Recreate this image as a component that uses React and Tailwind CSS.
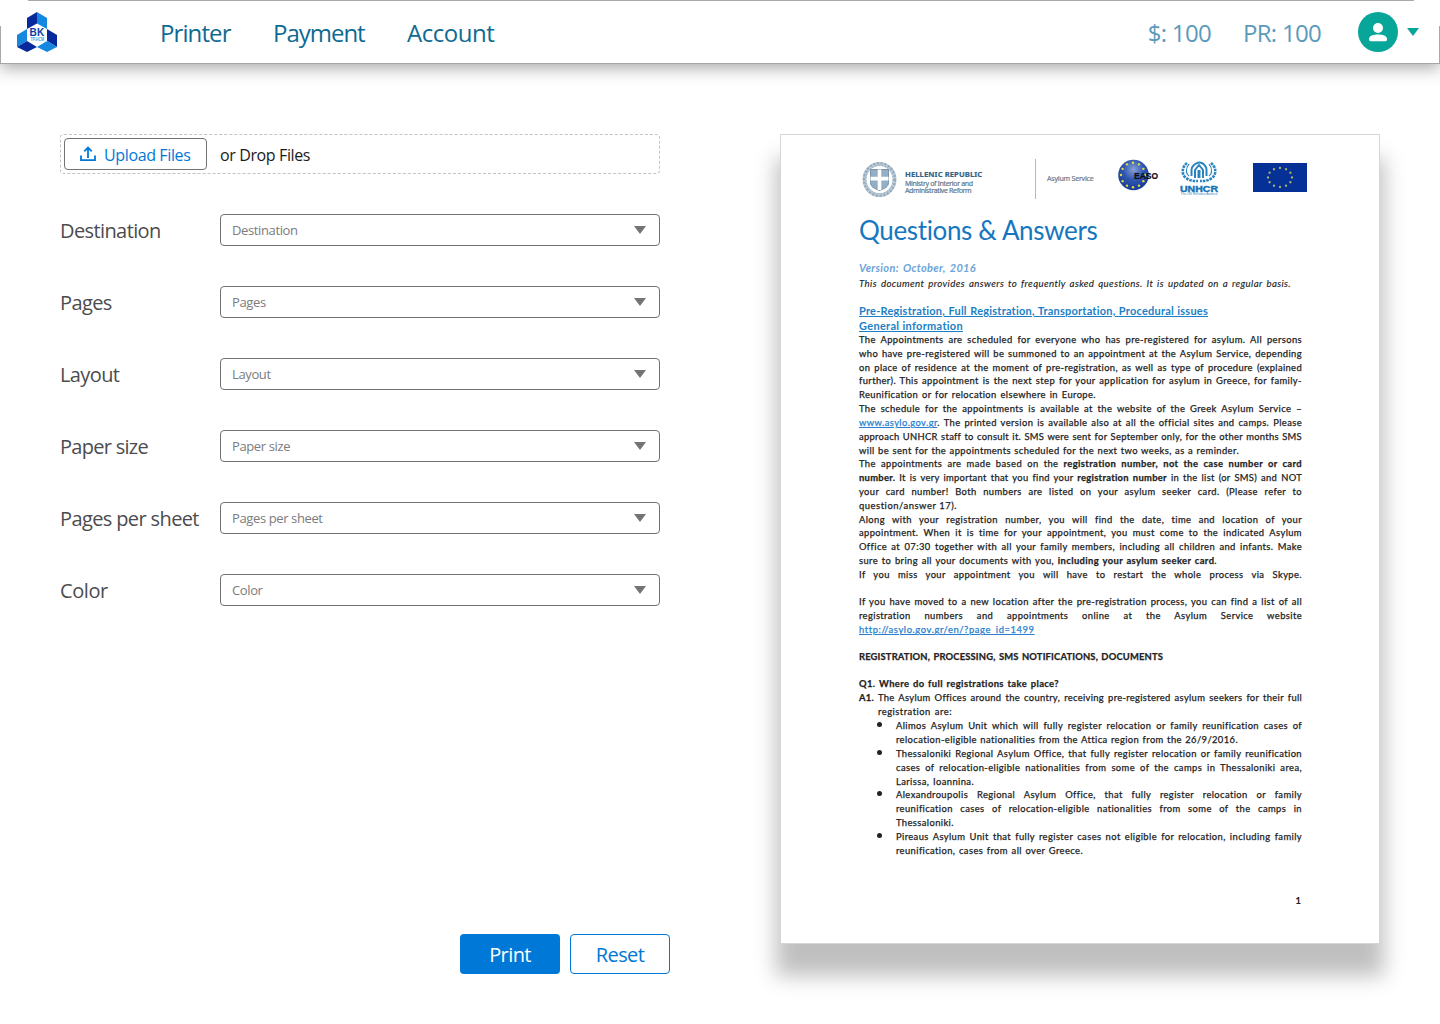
import React from "react";

const fields = [
  ["Destination", "tracking-[-0.600px]"],
  ["Pages", "tracking-[-0.600px]"],
  ["Layout", "tracking-[-0.600px]"],
  ["Paper size", "tracking-[-0.720px]"],
  ["Pages per sheet", "tracking-[-0.620px]"],
  ["Color", "tracking-[-0.400px]"],
];

const Caret = ({ className }) => (
  <svg viewBox="0 0 12 8" className={className} fill="currentColor">
    <path d="M0 0h12L6 8z" />
  </svg>
);

const Logo = () => (
  <svg viewBox="0 0 40 40" className="h-10 w-10">
    <path d="M10 6 20 0v11.5L10 17z" fill="#062a9b" />
    <path d="M20 0l10 6v11l-10-5.5z" fill="#1488de" />
    <path d="M0 23l10-6v12L0 35z" fill="#1488de" />
    <path d="M0 35l10-6 10 6-10 5z" fill="#062a9b" />
    <path d="M30 17l10 6v12l-10-6z" fill="#062a9b" />
    <path d="M20 35l10-6 10 6-10 5z" fill="#1488de" />
    <text x="12.600" y="24.300" fontSize="10" fontWeight="700" textLength="14.600" lengthAdjust="spacingAndGlyphs" fontFamily="Liberation Sans, sans-serif" fill="#0a3ca5">BK</text>
    <text x="13.400" y="28.900" fontSize="4.800" fontWeight="700" textLength="13.800" lengthAdjust="spacingAndGlyphs" fontFamily="Liberation Sans, sans-serif" fill="#4aa5e6">TP.HCM</text>
  </svg>
);

const Line = ({ w = "w-full", className = "", children }) => (
  <div className={`${w} ${className} whitespace-nowrap [text-align-last:justify]`}>{children}</div>
);

const Bullet = ({ lines }) => (
  <li className="flex">
    <span className="mt-[3px] mr-[14px] size-[5px] shrink-0 rounded-full bg-[#222]" />
    <div className="grow">
      {lines.map(([t, w]) => (
        <Line key={t} w={w}>{t}</Line>
      ))}
    </div>
  </li>
);

const starPoints = Array.from({ length: 12 }, (_, i) => [
  Math.sin((i * Math.PI) / 6),
  -Math.cos((i * Math.PI) / 6),
]);

const Emblem = () => (
  <svg viewBox="0 0 36 38" className="h-[38px] w-9">
    <ellipse cx="17.500" cy="18.500" rx="15" ry="15.600" fill="none" stroke="#bccbd6" strokeWidth="4" />
    <ellipse cx="17.500" cy="18.500" rx="15.600" ry="16.400" fill="none" stroke="#93a8b9" strokeWidth="2" strokeDasharray="2.200 1.600" />
    <ellipse cx="17.500" cy="18.500" rx="13.600" ry="14.200" fill="none" stroke="#8fa5b7" strokeWidth="1" strokeDasharray="1.400 1.800" />
    <path d="M8.500 8.500h18v13c0 4.500-4 6-9 8-5-2-9-3.500-9-8z" fill="#94aec4" stroke="#7893ab" />
    <path d="M15.700 8.500h3.600v7.300h7.200v3.600h-7.200v9.600h-3.600v-9.600H8.500v-3.600h7.200z" fill="#fff" />
  </svg>
);

const Easo = () => (
  <svg viewBox="0 0 41 32" className="h-8 w-[41px]">
    <defs>
      <radialGradient id="globe" cx="50%" cy="32%" r="60%">
        <stop offset="0" stopColor="#86a0d8" />
        <stop offset=".55" stopColor="#3157b0" />
        <stop offset="1" stopColor="#1c3f9c" />
      </radialGradient>
    </defs>
    <circle cx="15.500" cy="16" r="15.300" fill="url(#globe)" />
    {starPoints.map(([x, y], i) => (
      <circle key={i} cx={15 + x * 12} cy={16 + y * 12.3} r="1.200" fill="#e3df3d" />
    ))}
    <text x="16" y="19.900" fontSize="8.300" fontWeight="700" textLength="24" lengthAdjust="spacingAndGlyphs" fontFamily="Liberation Sans, sans-serif" fill="#0d0d14" stroke="#0d0d14" strokeWidth=".2">EASO</text>
  </svg>
);

const Unhcr = () => (
  <svg viewBox="0 0 40 34" className="h-[34px] w-10" fill="none" stroke="#2a84bf">
    <path d="M8 2C3 6 2 13 7 17c4 3 8 3 12 3M32 2c5 4 6 11 1 15-4 3-8 3-12 3" strokeWidth="2.600" strokeDasharray="2.600 .9" />
    <path d="M10 3C6 8 7 13 10 15M30 3c4 5 3 10 0 12" strokeWidth="1.200" />
    <path d="M12.500 15V9c0-4 4-7 7.500-7.500S27.500 5 27.500 9v6M16 17V9l4-5 4 5v8" strokeWidth="2" />
    <path d="M20 9v8" strokeWidth="3" />
    <text x="1" y="30.500" fontSize="8.700" fontWeight="700" textLength="38" lengthAdjust="spacingAndGlyphs" fontFamily="Liberation Sans, sans-serif" fill="#1673b4" stroke="#1673b4" strokeWidth=".4">UNHCR</text>
    <text x="1.500" y="33.700" fontSize="3" textLength="37" lengthAdjust="spacingAndGlyphs" fontFamily="Liberation Sans, sans-serif" fill="#3b8dc5" stroke="none">The UN Refugee Agency</text>
  </svg>
);

const EuFlag = () => (
  <svg viewBox="0 0 54 29" className="h-[29px] w-[54px]">
    <path d="M0 0h54v29H0z" fill="#053096" />
    {starPoints.map(([x, y], i) => (
      <circle key={i} cx={27 + x * 12} cy={14.5 + y * 9.5} r="1.150" fill="#a9b36a" />
    ))}
  </svg>
);

const Document = () => (
  <article className="h-[810px] w-[600px] border border-[#d6d6d6] bg-white pt-6 pl-[78px] font-[Lato,sans-serif] text-[#222] shadow-[0_28px_20px_4px_rgba(0,0,0,0.25)] [font-variant-ligatures:none]">
    <header className="flex h-10 items-start pl-[3px]">
      <div className="mt-0.5"><Emblem /></div>
      <div className="mt-[11px] ml-[7px] w-[130px] font-['Noto_Sans',sans-serif] text-[7px] leading-[7px] whitespace-nowrap text-[#66788c] [-webkit-text-stroke:0.200px_currentColor]">
        <div className="mb-px text-[7.600px] leading-[9px] font-bold tracking-[0.100px] text-[#2f6388]">HELLENIC REPUBLIC</div>
        <div className="tracking-[-0.360px]">Ministry of Interior and</div>
        <div className="tracking-[-0.360px]">Administrative Reform</div>
      </div>
      <div className="h-10 w-px bg-[#b5b8bd]" />
      <div className="mt-[15px] ml-[11px] w-[71px] font-['Noto_Sans',sans-serif] text-[7px] leading-[10px] tracking-[-0.200px] whitespace-nowrap text-[#75798a] [-webkit-text-stroke:0.200px_currentColor]">Asylum Service</div>
      <Easo />
      <div className="mt-0.5 ml-5"><Unhcr /></div>
      <div className="mt-1 ml-[34px]"><EuFlag /></div>
    </header>
    <h1 className="mt-[14px] h-[34px] w-[239px] text-[26px] leading-[34px] tracking-[-0.350px] whitespace-nowrap text-[#1677c0]">Questions &amp; Answers</h1>
    <div className="mt-[14px] w-[443px]">
      <Line w="w-[117px]" className="text-[11px] leading-[14px] font-bold tracking-[0.320px] text-[#6ba4da] italic">Version: October, 2016</Line>
      <Line w="w-[432px]" className="mt-px text-[9.700px] leading-[14px] tracking-[0.380px] italic [-webkit-text-stroke:0.120px_currentColor]">This document provides answers to frequently asked questions. It is updated on a regular basis.</Line>
      <div className="mt-[14px] text-[11px] leading-[14.500px] font-bold tracking-[0.220px] text-[#1c7fc6] underline">
        <Line w="w-[349px]">Pre-Registration, Full Registration, Transportation, Procedural issues</Line>
        <Line w="w-[104px]" className="tracking-[0.300px]">General information</Line>
      </div>
      <div className="text-[9.400px] leading-[13.810px] tracking-[0.400px] [-webkit-text-stroke:0.250px_currentColor]">
        <Line>The Appointments are scheduled for everyone who has pre-registered for asylum. All persons</Line>
        <Line>who have pre-registered will be summoned to an appointment at the Asylum Service, depending</Line>
        <Line className="tracking-[0.350px]">on place of residence at the moment of pre-registration, as well as type of procedure (explained</Line>
        <Line>further). This appointment is the next step for your application for asylum in Greece, for family-</Line>
        <Line w="w-[237px]">Reunification or for relocation elsewhere in Europe.</Line>
        <Line>The schedule for the appointments is available at the website of the Greek Asylum Service –</Line>
        <Line><a className="text-[#2b7fd0] underline">www.asylo.gov.gr</a>. The printed version is available also at all the official sites and camps. Please</Line>
        <Line className="tracking-[0.300px]">approach UNHCR staff to consult it. SMS were sent for September only, for the other months SMS</Line>
        <Line w="w-[380px]">will be sent for the appointments scheduled for the next two weeks, as a reminder.</Line>
        <Line>The appointments are made based on the <b>registration number, not the case number or card</b></Line>
        <Line className="tracking-[0.300px]"><b>number.</b> It is very important that you find your <b>registration number</b> in the list (or SMS) and NOT</Line>
        <Line>your card number! Both numbers are listed on your asylum seeker card. (Please refer to</Line>
        <Line w="w-[98px]" className="tracking-[0.550px]">question/answer 17).</Line>
        <Line>Along with your registration number, you will find the date, time and location of your</Line>
        <Line>appointment. When it is time for your appointment, you must come to the indicated Asylum</Line>
        <Line>Office at 07:30 together with all your family members, including all children and infants. Make</Line>
        <Line w="w-[358px]">sure to bring all your documents with you, <b>including your asylum seeker card</b>.</Line>
        <Line>If you miss your appointment you will have to restart the whole process via Skype.</Line>
        <br />
        <Line>If you have moved to a new location after the pre-registration process, you can find a list of all</Line>
        <Line>registration numbers and appointments online at the Asylum Service website</Line>
        <Line w="w-[176px]" className="tracking-[0.590px]"><a className="text-[#2b7fd0] underline">http://asylo.gov.gr/en/?page_id=1499</a></Line>
        <br />
        <Line w="w-[304px]" className="-mt-px mb-px font-bold tracking-[0.170px]">REGISTRATION, PROCESSING, SMS NOTIFICATIONS, DOCUMENTS</Line>
        <br />
        <Line w="w-[200px]" className="-mt-px font-bold">Q1. Where do full registrations take place?</Line>
        <Line className="tracking-[0.320px]"><b>A1.</b> The Asylum Offices around the country, receiving pre-registered asylum seekers for their full</Line>
        <Line w="w-[74px]" className="ml-[19px] tracking-[0.500px]">registration are:</Line>
        <ul className="pt-[0.600px] pl-[18px]">
          <Bullet lines={[["Alimos Asylum Unit which will fully register relocation or family reunification cases of"], ["relocation-eligible nationalities from the Attica region from the 26/9/2016.", "w-[342px]"]]} />
          <Bullet lines={[["Thessaloniki Regional Asylum Office, that fully register relocation or family reunification"], ["cases of relocation-eligible nationalities from some of the camps in Thessaloniki area,"], ["Larissa, Ioannina.", "w-[78px]"]]} />
          <Bullet lines={[["Alexandroupolis Regional Asylum Office, that fully register relocation or family"], ["reunification cases of relocation-eligible nationalities from some of the camps in"], ["Thessaloniki.", "w-[59px]"]]} />
          <Bullet lines={[["Pireaus Asylum Unit that fully register cases not eligible for relocation, including family"], ["reunification, cases from all over Greece.", "w-[187px]"]]} />
        </ul>
      </div>
      <div className="mt-[35.400px] pr-px text-right text-[10px] leading-[14px] font-bold">1</div>
    </div>
  </article>
);

export default function App() {
  return (
    <div className="h-[1024px] w-[1440px] overflow-hidden bg-white font-['Open_Sans',sans-serif]">
      <header className="relative flex h-16 items-start border-b border-[#a9a4a6] bg-white shadow-[0_4px_16px_rgba(0,0,0,0.35)]">
        <div className="absolute top-0 right-[26px] left-[28px] h-px bg-[#aca7a9]" />
        <div className="absolute top-[26px] bottom-0 left-0 w-px bg-[#aca7a9]" />
        <div className="absolute top-[26px] right-0 bottom-0 w-px bg-[#aca7a9]" />
        <div className="mt-3 ml-[17px]"><Logo /></div>
        <nav className="mt-[17px] ml-[103px] flex text-2xl leading-8 text-[#0f6a92]">
          <a className="w-[113px] tracking-[-0.900px]">Printer</a>
          <a className="w-[134px] tracking-[-1.020px]">Payment</a>
          <a className="tracking-[-0.450px]">Account</a>
        </nav>
        <div className="mt-[17px] ml-auto flex gap-8 text-2xl leading-8 tracking-[-0.700px] text-[#5b9aba]">
          <span>$: 100</span>
          <span>PR: 100</span>
        </div>
        <div className="mt-3 ml-[37px] grid size-10 place-items-center rounded-full bg-[#08a699] text-white">
          <svg viewBox="0 0 20 20" className="size-5" fill="currentColor">
            <circle cx="10" cy="6" r="5" />
            <path d="M1 17c0-3.500 4.500-4.600 9-4.600s9 1.100 9 4.600c0 1.500-.5 2.200-1.500 2.200h-15C1.500 19.200 1 18.500 1 17z" />
          </svg>
        </div>
        <Caret className="mt-7 mr-[21px] ml-[9px] h-2 w-3 text-[#08a699]" />
      </header>
      <main className="flex items-start justify-between px-[60px] pt-[70px]">
        <section className="flex h-[840px] w-[610px] flex-col">
          <div className="flex h-10 w-[600px] items-center rounded border border-dashed border-[#c3c3c3] pl-[3px]">
            <button className="flex h-8 w-[143px] items-center rounded border border-[#737375] pl-[15px] text-base tracking-[-0.370px] whitespace-nowrap text-[#0078d7]">
              <svg viewBox="0 0 16 16" className="mr-2 size-4" fill="none" stroke="currentColor" strokeWidth="1.800">
                <path d="M1 9.500v4.600h14V9.500M8 12V1.500M4.300 5.300l3.700-3.800 3.700 3.800" />
              </svg>
              <span className="pt-0.5">Upload Files</span>
            </button>
            <span className="ml-[13px] pt-0.5 text-base tracking-[-0.380px] text-[#1b1b1b]">or Drop Files</span>
          </div>
          {fields.map(([f, tracking]) => (
            <div key={f} className="mt-10 flex h-8 items-center">
              <label className={`w-40 pt-0.5 text-xl whitespace-nowrap text-[#4c4c4e] ${tracking}`}>{f}</label>
              <div className="flex h-8 w-[440px] items-center justify-between rounded border border-[#737375] pr-[13px] pl-[11px]">
                <span className="pt-0.5 text-[13px] tracking-[-0.380px] text-[#7b7b7d]">{f}</span>
                <Caret className="h-2 w-3 text-[#737375]" />
              </div>
            </div>
          ))}
          <div className="mt-auto flex justify-end gap-2.5 text-xl tracking-[-0.600px]">
            <button className="h-10 w-[100px] rounded bg-[#0078d7] pt-0.5 text-white">Print</button>
            <button className="h-10 w-[100px] rounded border border-[#0078d7] pt-0.5 text-[#0078d7]">Reset</button>
          </div>
        </section>
        <Document />
      </main>
    </div>
  );
}
